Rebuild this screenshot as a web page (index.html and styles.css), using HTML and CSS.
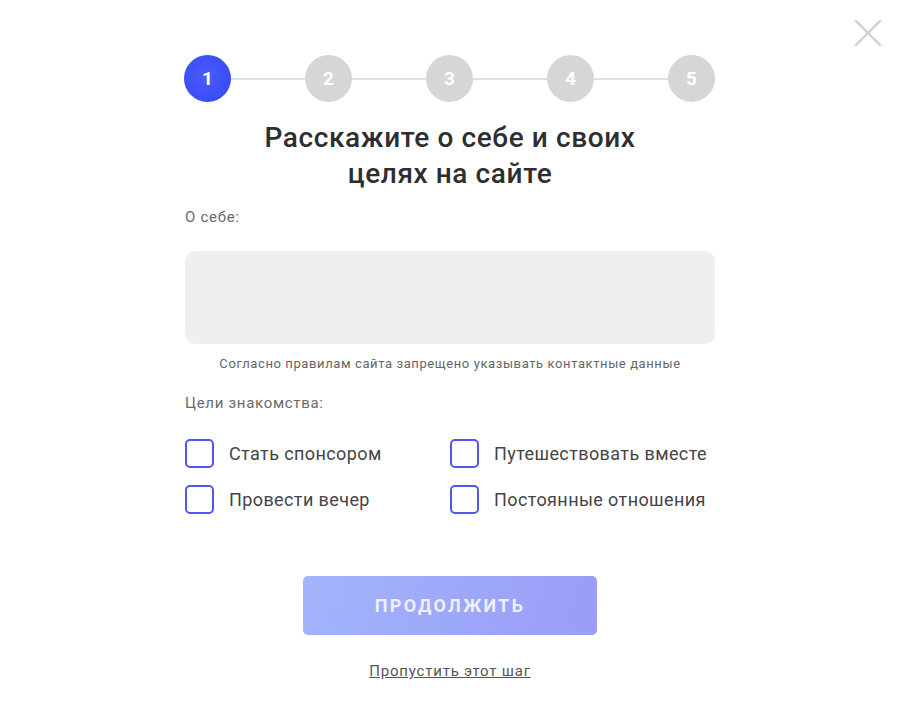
FILE: index.html
```html
<!DOCTYPE html>
<html lang="ru">
<head>
<meta charset="utf-8">
<title>Расскажите о себе</title>
<link rel="stylesheet" href="styles.css">
</head>
<body>
<button class="close" aria-label="Закрыть">
  <svg width="28" height="28" viewBox="0 0 28 28"><path d="M2 2L26 26M26 2L2 26" stroke="#d0d0d0" stroke-width="2.4" stroke-linecap="round"/></svg>
</button>
<main class="wrap">
  <div class="steps">
    <span class="step active">1</span>
    <span class="line"></span>
    <span class="step">2</span>
    <span class="line"></span>
    <span class="step">3</span>
    <span class="line"></span>
    <span class="step">4</span>
    <span class="line"></span>
    <span class="step">5</span>
  </div>
  <h1 class="title">Расскажите о себе и своих<br>целях на сайте</h1>
  <div class="label">О себе:</div>
  <div class="textarea"></div>
  <div class="hint">Согласно правилам сайта запрещено указывать контактные данные</div>
  <div class="label goals">Цели знакомства:</div>
  <div class="checks">
    <label class="check"><span class="box"></span>Стать спонсором</label>
    <label class="check"><span class="box"></span>Путешествовать вместе</label>
    <label class="check"><span class="box"></span>Провести вечер</label>
    <label class="check"><span class="box"></span>Постоянные отношения</label>
  </div>
  <div class="actions">
    <button class="continue">ПРОДОЛЖИТЬ</button>
    <a class="skip" href="#">Пропустить этот шаг</a>
  </div>
</main>
</body>
</html>
```
FILE: styles.css
```css
* { box-sizing: border-box; }
body {
  margin: 0;
  background: #fff;
  font-family: Roboto, "Liberation Sans", sans-serif;
  color: #333;
}
.close {
  position: absolute;
  top: 19px;
  left: 854px;
  width: 28px;
  height: 28px;
  padding: 0;
  border: 0;
  background: none;
}
.wrap {
  width: 530px;
  margin: 0 auto;
  padding-top: 55px;
  display: flex;
  flex-direction: column;
}
.steps {
  display: flex;
  align-items: center;
  margin-left: -1px;
}
.step {
  width: 47px;
  height: 47px;
  border-radius: 50%;
  background: #d6d6d6;
  color: #fff;
  font-weight: 700;
  font-size: 19px;
  display: flex;
  align-items: center;
  justify-content: center;
  flex: none;
}
.step.active {
  background: radial-gradient(circle at 45% 45%, #4a5cff, #3346ee);
}
.line {
  flex: 1;
  height: 2px;
  background: #e0e0e0;
}
.title {
  margin: 18px 0 0;
  text-align: center;
  font-size: 28px;
  line-height: 36px;
  font-weight: 500;
  letter-spacing: 0.6px;
  color: #2e2e2e;
}
.label {
  margin-top: 15px;
  font-size: 15px;
  line-height: 20px;
  letter-spacing: 0.7px;
  color: #6a6a6a;
}
.textarea {
  margin-top: 24px;
  height: 93px;
  border-radius: 10px;
  background: #efeff1;
}
.hint {
  margin-top: 12px;
  text-align: center;
  font-size: 13px;
  line-height: 16px;
  letter-spacing: 0.6px;
  color: #666;
}
.label.goals {
  margin-top: 21px;
}
.checks {
  margin-top: 26px;
  display: grid;
  grid-template-columns: 1fr 1fr;
  row-gap: 17px;
}
.check {
  display: flex;
  align-items: center;
  gap: 15px;
  font-size: 18px;
  line-height: 28px;
  letter-spacing: 0.4px;
  color: #444;
}
.box {
  width: 29px;
  height: 29px;
  border: 2px solid #5057ee;
  border-radius: 5px;
  flex: none;
}
.actions {
  margin-top: 62px;
  display: flex;
  flex-direction: column;
  align-items: center;
}
.continue {
  width: 294px;
  height: 59px;
  border: 0;
  border-radius: 5px;
  background: linear-gradient(110deg, #a1b5fc, #9a9cf6);
  color: #eef0ff;
  font-family: Roboto, "Liberation Sans", sans-serif;
  font-size: 18px;
  font-weight: 700;
  letter-spacing: 2.3px;
}
.skip {
  margin-top: 26px;
  font-size: 15px;
  line-height: 20px;
  letter-spacing: 0.8px;
  color: #555;
  text-decoration: underline;
}
```
